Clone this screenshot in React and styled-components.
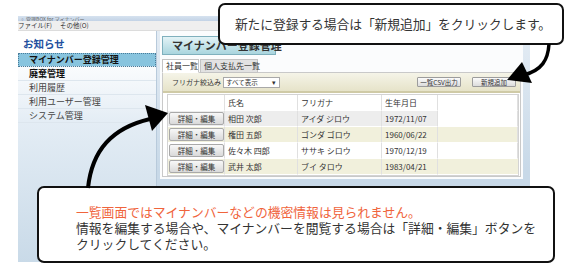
import React from "react";
import styled, { createGlobalStyle } from "styled-components";

const Global = createGlobalStyle`
  html, body { margin: 0; padding: 0; background: #fff; }
  body { font-family: "Noto Sans CJK JP", "Noto Sans", sans-serif; }
`;

const Stage = styled.div`
  position: relative;
  width: 575px;
  height: 278px;
  overflow: hidden;
  background: #fff;
  padding-top: 16px;
  box-sizing: border-box;
`;

const Window = styled.div`
  margin-left: 18px;
  width: 512px;
  height: 246px;
  display: flex;
  flex-direction: column;
  background: #c8d9e8;
`;

const TitleBar = styled.div`
  height: 5px;
  overflow: hidden;
  background: linear-gradient(#d6e2ef, #c3d3e6);
  font-size: 5px;
  line-height: 5px;
  color: #666;
  padding-left: 2px;
  white-space: nowrap;
`;

const MenuBar = styled.div`
  height: 9px;
  display: flex;
  gap: 8px;
  background: #efefef;
  border-bottom: 1px solid #dcdcdc;
  font-size: 6.5px;
  line-height: 9px;
  color: #333;
  white-space: nowrap;
`;

const Body = styled.div`
  flex: 1;
  display: flex;
  min-height: 0;
`;

const Sidebar = styled.div`
  width: 138px;
  border-right: 1px solid #b8cadb;
  background: linear-gradient(#ffffff 0px, #ffffff 24px, #e4edf5 90px, #c9dae8 100%);
  display: flex;
  flex-direction: column;
`;

const SideHeading = styled.div`
  height: 22px;
  padding: 5px 0 0 5px;
  box-sizing: border-box;
  font-size: 10.5px;
  line-height: 16px;
  font-weight: 700;
  color: #1e4f9e;
`;

const SideItem = styled.div`
  height: 14px;
  box-sizing: border-box;
  padding-left: 11px;
  font-size: 9px;
  line-height: 13px;
  white-space: nowrap;
  color: ${(p) => (p.$bold ? "#111" : "#444")};
  font-weight: ${(p) => (p.$bold ? 700 : 400)};
  border-bottom: 1px solid #dde6ee;
  background: ${(p) => (p.$active ? "#88c4de" : "transparent")};
  outline: ${(p) => (p.$active ? "1px dotted #4a7c9a" : "none")};
  outline-offset: -1px;
`;

const Main = styled.div`
  flex: 1;
  padding: 0 7px 0 3px;
  background: linear-gradient(#e4ecf4, #c8d9e8 60%);
`;

const Panel = styled.div`
  height: 148px;
  background: #fbfcfd;
  padding: 5px 2px 0 2px;
  box-sizing: border-box;
  display: flex;
  flex-direction: column;
`;

const TitleButton = styled.div`
  width: 114px;
  height: 19px;
  box-sizing: border-box;
  border: 1px solid #7fb0bd;
  background: linear-gradient(#e4f3f6, #a9d5de);
  padding-left: 9px;
  font-size: 11px;
  font-weight: 700;
  line-height: 17px;
  color: #333;
  white-space: nowrap;
`;

const Tabs = styled.div`
  display: flex;
  gap: 1px;
  margin-top: 4px;
  height: 14px;
`;

const Tab = styled.div`
  width: ${(p) => p.$w}px;
  box-sizing: border-box;
  border: 1px solid #c4c4c4;
  border-bottom: ${(p) => (p.$active ? "1px solid #fff" : "1px solid #c4c4c4")};
  background: ${(p) => (p.$active ? "#fff" : "#e2e2e2")};
  font-size: 8px;
  line-height: 12px;
  padding-left: 3px;
  color: #333;
  white-space: nowrap;
  position: relative;
  z-index: 1;
`;

const TabBody = styled.div`
  height: 105px;
  margin-top: -1px;
  border: 1px solid #c9c9c9;
  background: #fff;
  box-sizing: border-box;
  display: flex;
  flex-direction: column;
`;

const Toolbar = styled.div`
  height: 21px;
  box-sizing: border-box;
  display: flex;
  align-items: center;
  padding: 0 4px 0 9px;
  background: linear-gradient(#f5f4e8, #e6e3c9);
  border-bottom: 2px solid #cfcaa6;
  font-size: 7px;
  color: #333;
  white-space: nowrap;
`;

const Label = styled.span`
  margin-right: 2px;
  min-width: 48px;
`;

const Select = styled.div`
  width: 57px;
  height: 11px;
  box-sizing: border-box;
  border: 1px solid #a8a8a8;
  background: #fff;
  display: flex;
  justify-content: space-between;
  align-items: center;
  padding: 0 3px 0 2px;
  font-size: 6.5px;
`;

const Spacer = styled.div`
  flex: 1;
`;

const ToolButton = styled.div`
  width: 44px;
  height: 10px;
  box-sizing: border-box;
  margin-left: 11px;
  border: 1px solid #9c9c9c;
  border-radius: 1px;
  background: linear-gradient(#fbfbfb, #dcdcdc);
  font-size: 6.5px;
  line-height: 8px;
  text-align: center;
`;

const Table = styled.div`
  margin: 1px 0 0 4px;
  width: 352px;
  border: 1px solid #d3d3d3;
  box-sizing: border-box;
  display: grid;
  grid-template-columns: 57px 73px 84px 56px 1fr;
  grid-auto-rows: 16px;
`;

const Cell = styled.div`
  box-sizing: border-box;
  border-right: 1px solid #e0e0e0;
  border-bottom: 1px solid #ffffff;
  background: ${(p) => p.$bg || "#fff"};
  font-size: 8px;
  line-height: 15px;
  padding-left: 3px;
  color: #333;
  white-space: nowrap;
  display: flex;
  align-items: center;
  &:last-child { border-right: none; }
`;

const EditButton = styled.div`
  width: 55px;
  height: 13px;
  margin-left: -2px;
  box-sizing: border-box;
  border: 1px solid #a9a9a9;
  border-radius: 2px;
  background: linear-gradient(#f8f8f8, #d9d9d9);
  font-size: 7.5px;
  line-height: 11px;
  text-align: center;
  color: #333;
`;

const Callout = styled.div`
  position: absolute;
  left: ${(p) => p.$x}px;
  top: ${(p) => p.$y}px;
  width: ${(p) => p.$w}px;
  height: ${(p) => p.$h}px;
  box-sizing: border-box;
  border: 2px solid #111;
  border-radius: 7px;
  background: #fff;
  color: #333;
`;

const TopText = styled.div`
  font-size: 12.8px;
  line-height: 38px;
  text-align: center;
  padding-left: 4px;
  white-space: nowrap;
  letter-spacing: -0.1px;
`;

const BottomText = styled.div`
  padding: 16px 0 0 37px;
  font-size: 12.8px;
  line-height: 16px;
  white-space: nowrap;
`;

const Warn = styled.div`
  color: #f0643c;
`;

const Overlay = styled.svg`
  position: absolute;
  left: 0;
  top: 0;
  pointer-events: none;
`;

const rows = [
  ["相田 次郎", "アイダ ジロウ", "1972/11/07"],
  ["権田 五郎", "ゴンダ ゴロウ", "1960/06/22"],
  ["佐々木 四郎", "ササキ シロウ", "1970/12/19"],
  ["武井 太郎", "ブイ タロウ", "1983/04/21"],
];

const rowBg = ["#ededed", "#f1f0dc", "#ffffff", "#f1f0dc"];

export default function App() {
  return (
    <>
      <Global />
      <Stage>
        <Window>
          <TitleBar>▫ 管理BOX for マイナンバー</TitleBar>
          <MenuBar>
            <span>ファイル(F)</span>
            <span>その他(O)</span>
          </MenuBar>
          <Body>
            <Sidebar>
              <SideHeading>お知らせ</SideHeading>
              <SideItem $active $bold>マイナンバー登録管理</SideItem>
              <SideItem $bold>廃棄管理</SideItem>
              <SideItem>利用履歴</SideItem>
              <SideItem>利用ユーザー管理</SideItem>
              <SideItem>システム管理</SideItem>
            </Sidebar>
            <Main>
              <Panel>
                <TitleButton>マイナンバー登録管理</TitleButton>
                <Tabs>
                  <Tab $w={37} $active>社員一覧</Tab>
                  <Tab $w={58}>個人支払先一覧</Tab>
                </Tabs>
                <TabBody>
                  <Toolbar>
                    <Label>フリガナ絞込み</Label>
                    <Select>
                      <span>すべて表示</span>
                      <span>▾</span>
                    </Select>
                    <Spacer />
                    <ToolButton>一覧CSV出力</ToolButton>
                    <ToolButton>新規追加</ToolButton>
                  </Toolbar>
                  <Table>
                    <Cell />
                    <Cell>氏名</Cell>
                    <Cell>フリガナ</Cell>
                    <Cell>生年月日</Cell>
                    <Cell />
                    {rows.map((r, i) => (
                      <React.Fragment key={i}>
                        <Cell $bg={rowBg[i]}>
                          <EditButton>詳細・編集</EditButton>
                        </Cell>
                        <Cell $bg={rowBg[i]}>{r[0]}</Cell>
                        <Cell $bg={rowBg[i]}>{r[1]}</Cell>
                        <Cell $bg={rowBg[i]}>{r[2]}</Cell>
                        <Cell $bg={i === 0 ? "#fff" : rowBg[i]} />
                      </React.Fragment>
                    ))}
                  </Table>
                </TabBody>
              </Panel>
            </Main>
          </Body>
        </Window>

        <Callout $x={218} $y={3} $w={346} $h={42}>
          <TopText>新たに登録する場合は「新規追加」をクリックします。</TopText>
        </Callout>

        <Callout $x={37} $y={186} $w={518} $h={77}>
          <BottomText>
            <Warn>一覧画面ではマイナンバーなどの機密情報は見られません。</Warn>
            <div>情報を編集する場合や、マイナンバーを閲覧する場合は「詳細・編集」ボタンを</div>
            <div>クリックしてください。</div>
          </BottomText>
        </Callout>

        <Overlay width="575" height="278" viewBox="0 0 575 278">
          <path d="M549 44 C548 60 542 70 524 75" fill="none" stroke="#000" strokeWidth="3.5" />
          <polygon points="507,80 522,62 532,83" fill="#000" />
          <path d="M88 188 C92 150 112 128 150 119" fill="none" stroke="#000" strokeWidth="4" />
          <polygon points="168,113 145,105 152,131" fill="#000" />
        </Overlay>
      </Stage>
    </>
  );
}
